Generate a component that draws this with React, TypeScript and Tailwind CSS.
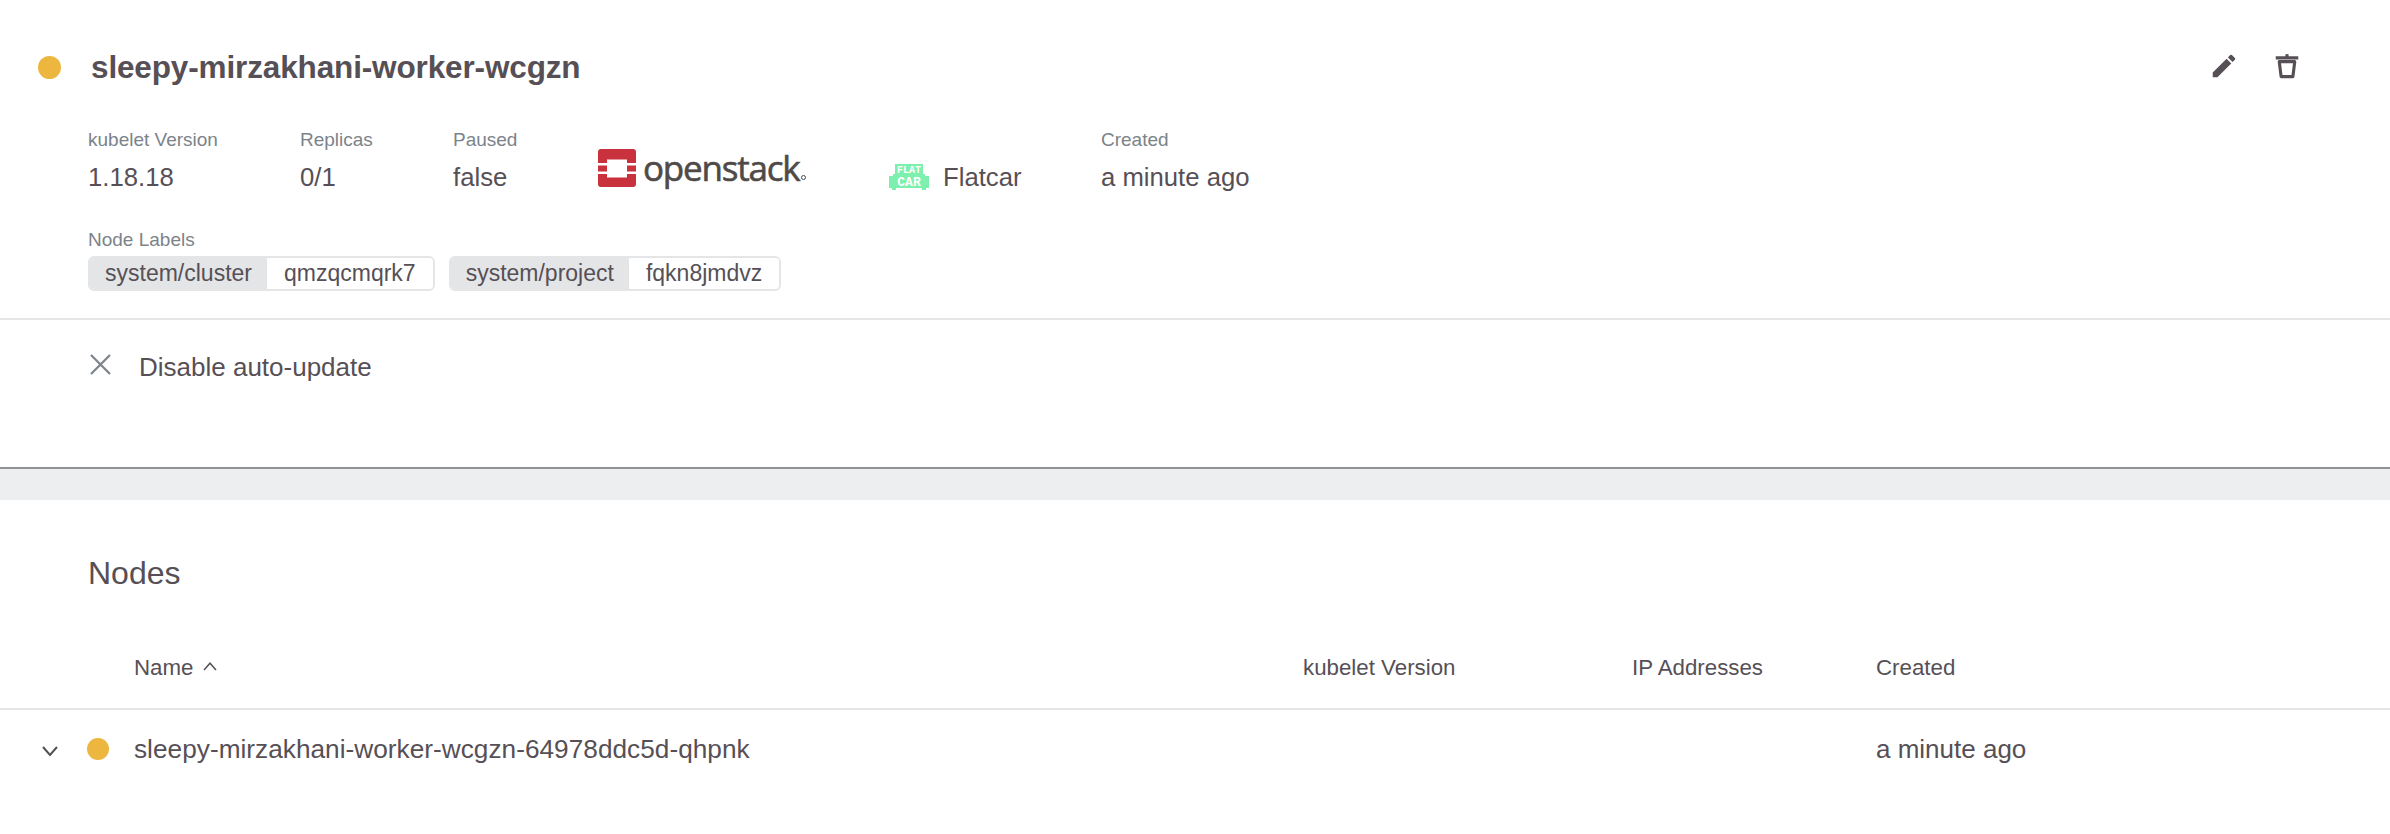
const font = "font-['Liberation_Sans',Arial,sans-serif]";

function Dot({ className = "" }: { className?: string }) {
  return <span className={`block w-[22px] h-[22px] rounded-full bg-[#edb63f] ${className}`} />;
}

function Meta({ label, value, className = "" }: { label: string; value: string; className?: string }) {
  return (
    <div className={`flex flex-col ${className}`}>
      <span className="text-[19px] leading-[22px] text-[#7c8389]">{label}</span>
      <span className="mt-[11px] text-[25.7px] leading-[30px] text-[#565056]">{value}</span>
    </div>
  );
}

function Chip({ k, v }: { k: string; v: string }) {
  return (
    <div className="flex h-[35px] rounded-[6px] border-2 border-[#e3e5e7] overflow-hidden text-[23px] leading-[31px] text-[#565056]">
      <span className="bg-[#e3e5e7] px-[15px]">{k}</span>
      <span className="bg-white px-[17px]">{v}</span>
    </div>
  );
}

function OpenstackLogo() {
  return (
    <div className="flex items-center w-[212px] h-[38px]">
      <svg width="38" height="38" viewBox="0 0 38 38" className="shrink-0">
        <path
          fill="#c9313c"
          d="M3 0h32a3 3 0 0 1 3 3v11h-9v-3.5H9V14H0V3a3 3 0 0 1 3-3ZM0 16.500h9v6H0ZM29 16.500h9v6h-9ZM0 25h9v3.500h20V25h9v10a3 3 0 0 1-3 3H3a3 3 0 0 1-3-3Z"
        />
      </svg>
      <span className="ml-[7px] font-['Open_Sans',sans-serif] text-[35px] leading-[38px] tracking-[-1.2px] text-[#4f4a48] [-webkit-text-stroke:0.6px_#4f4a48]">
        openstack
      </span>
      <span className="self-end mb-[7px] ml-[1px] w-[5px] h-[5px] rounded-full border border-[#4f4a48]" />
    </div>
  );
}

function FlatcarLogo() {
  return (
    <svg width="40" height="26" viewBox="0 0 40 26" className="shrink-0">
      <path fill="#7df0b0" d="M6 0h28v10h2v2h4v12h-3v2h-4v-2H7v2H3v-2H0V12h4v-2h2Z" />
      <text x="20" y="9" textAnchor="middle" fontSize="10" fontWeight="700" fill="#fff" fontFamily="'Liberation Mono',monospace">
        FLAT
      </text>
      <text x="20" y="22" textAnchor="middle" fontSize="13" fontWeight="700" fill="#fff" fontFamily="'Liberation Mono',monospace">
        CAR
      </text>
    </svg>
  );
}

export default function App() {
  return (
    <div className={`w-[2390px] h-[834px] overflow-hidden bg-white ${font}`}>
      <section className="h-[469px] border-b-2 border-[#8f9396] flex flex-col">
        <div className="h-[320px] border-b-2 border-[#e3e5e7] relative">
          <div className="flex items-center pl-[38px] pt-[50px] h-[84px]">
            <Dot className="w-[23px] h-[23px]" />
            <h1 className="ml-[30px] text-[31.5px] leading-[34px] font-bold tracking-[-0.14px] text-[#565056]">
              sleepy-mirzakhani-worker-wcgzn
            </h1>
            <div className="ml-auto flex items-center gap-[33px] pr-[88px] -mt-[2px] text-[#565056]">
              <svg width="30" height="30" viewBox="0 0 24 24" fill="currentColor">
                <path d="M3 17.25V21h3.75L17.81 9.94l-3.75-3.75L3 17.25ZM20.71 7.04a1 1 0 0 0 0-1.41l-2.34-2.34a1 1 0 0 0-1.41 0l-1.83 1.83 3.75 3.75 1.83-1.83Z" />
              </svg>
              <svg width="30" height="30" viewBox="0 0 24 24" fill="none" stroke="currentColor" strokeWidth="2.5" strokeLinejoin="round">
                <path d="M3 5.500h18M5.800 8.500h12.400l-1.500 12H7.300l-1.500-12Z" />
                <path d="M12 2.500v3" />
              </svg>
            </div>
          </div>
          <div className="flex items-start pl-[88px] mt-[45px]">
            <Meta label="kubelet Version" value="1.18.18" className="w-[212px]" />
            <Meta label="Replicas" value="0/1" className="w-[153px]" />
            <Meta label="Paused" value="false" className="w-[145px]" />
            <div className="w-[290px] pt-[20px]">
              <OpenstackLogo />
            </div>
            <div className="w-[213px] flex items-center pt-[33px] pl-[1px]">
              <FlatcarLogo />
              <span className="ml-[14px] text-[25.7px] leading-[30px] text-[#565056]">Flatcar</span>
            </div>
            <Meta label="Created" value="a minute ago" />
          </div>
          <div className="pl-[88px] mt-[37px]">
            <div className="text-[19px] leading-[22px] text-[#7c8389]">Node Labels</div>
            <div className="flex gap-[14px] mt-[5px]">
              <Chip k="system/cluster" v="qmzqcmqrk7" />
              <Chip k="system/project" v="fqkn8jmdvz" />
            </div>
          </div>
        </div>
        <div className="flex items-center pl-[90px] pt-[31px]">
          <svg width="21" height="21" viewBox="0 0 21 21" fill="none" stroke="#7c8389" strokeWidth="2.200" className="-mt-[5px]">
            <path d="M1 1l19 19M20 1L1 20" />
          </svg>
          <span className="ml-[28px] text-[26px] leading-[32px] text-[#565056]">Disable auto-update</span>
        </div>
      </section>
      <div className="h-[31px] bg-[#edeef0]" />
      <section>
        <h2 className="pl-[88px] pt-[54px] text-[32px] leading-[38px] font-normal text-[#565056]">Nodes</h2>
        <div className="mt-[63px] h-[55px] border-b-2 border-[#e3e5e7] flex text-[22.3px] leading-[26px] text-[#565056]">
          <div className="w-[1303px] pl-[134px] flex items-start gap-[8px]">
            <span>Name</span>
            <svg width="18" height="18" viewBox="0 0 24 24" fill="none" stroke="currentColor" strokeWidth="2" className="mt-[3px]">
              <path d="M4 16l8-9 8 9" />
            </svg>
          </div>
          <div className="w-[329px]">kubelet Version</div>
          <div className="w-[244px]">IP Addresses</div>
          <div>Created</div>
        </div>
        <div className="h-[79px] flex items-center text-[26px] text-[#565056]">
          <div className="w-[134px] pl-[38px] flex items-center">
            <svg width="24" height="24" viewBox="0 0 24 24" fill="none" stroke="currentColor" strokeWidth="2">
              <path d="M5 9l7 8 7-8" />
            </svg>
            <Dot className="ml-[25px] -mt-[2px]" />
          </div>
          <div className="w-[1742px] tracking-[0.03px]">
            <span className="text-[26.2px]">sleepy-mirzakhani-worker-wcgzn-64978ddc5d-qhpnk</span>
          </div>
          <div>a minute ago</div>
        </div>
      </section>
    </div>
  );
}
